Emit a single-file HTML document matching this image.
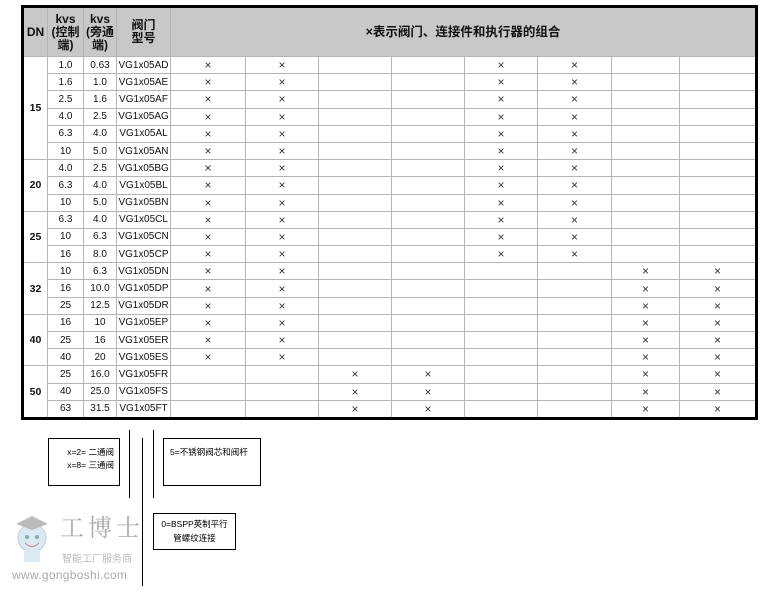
<!DOCTYPE html>
<html><head><meta charset="utf-8"><style>
body{margin:0;width:778px;height:594px;background:#fff;position:relative;overflow:hidden;font-family:"Liberation Sans","Noto Sans CJK SC",sans-serif;}
table{position:absolute;left:21px;top:5px;border-collapse:collapse;border:3px solid #000;table-layout:fixed;width:737px;}
td{border:1px solid #b4b4b4;text-align:center;font-size:10px;padding:0;height:16.2px;color:#111;}
tr.h td{background:#c8c8c8;height:48px;font-weight:bold;font-size:12px;line-height:13px;}
tr.h td.t{font-size:12.5px;}
td.dn{font-weight:bold;font-size:10.5px;}
tr.g td{border-top:1.5px solid #555;}
td.x{font-size:12px;color:#333;}
.a{position:absolute;}
.box{position:absolute;border:1px solid #000;font-size:8.5px;}
.vl{position:absolute;width:1px;background:#000;}
</style></head><body>
<table>
<colgroup><col style="width:25px"><col style="width:36px"><col style="width:33px"><col style="width:54px"><col style="width:75px"><col style="width:73px"><col style="width:73px"><col style="width:73px"><col style="width:73px"><col style="width:74px"><col style="width:68px"><col style="width:77px"></colgroup>
<tr class="h"><td>DN</td><td>kvs<br>(控制<br>端)</td><td>kvs<br>(旁通<br>端)</td><td>阀门<br>型号</td><td colspan="8" class="t">×表示阀门、连接件和执行器的组合</td></tr>
<tr><td class="dn" rowspan="6">15</td><td>1.0</td><td>0.63</td><td>VG1x05AD</td><td class="x">×</td><td class="x">×</td><td></td><td></td><td class="x">×</td><td class="x">×</td><td></td><td></td></tr>
<tr><td>1.6</td><td>1.0</td><td>VG1x05AE</td><td class="x">×</td><td class="x">×</td><td></td><td></td><td class="x">×</td><td class="x">×</td><td></td><td></td></tr>
<tr><td>2.5</td><td>1.6</td><td>VG1x05AF</td><td class="x">×</td><td class="x">×</td><td></td><td></td><td class="x">×</td><td class="x">×</td><td></td><td></td></tr>
<tr><td>4.0</td><td>2.5</td><td>VG1x05AG</td><td class="x">×</td><td class="x">×</td><td></td><td></td><td class="x">×</td><td class="x">×</td><td></td><td></td></tr>
<tr><td>6.3</td><td>4.0</td><td>VG1x05AL</td><td class="x">×</td><td class="x">×</td><td></td><td></td><td class="x">×</td><td class="x">×</td><td></td><td></td></tr>
<tr><td>10</td><td>5.0</td><td>VG1x05AN</td><td class="x">×</td><td class="x">×</td><td></td><td></td><td class="x">×</td><td class="x">×</td><td></td><td></td></tr>
<tr class="g"><td class="dn" rowspan="3">20</td><td>4.0</td><td>2.5</td><td>VG1x05BG</td><td class="x">×</td><td class="x">×</td><td></td><td></td><td class="x">×</td><td class="x">×</td><td></td><td></td></tr>
<tr><td>6.3</td><td>4.0</td><td>VG1x05BL</td><td class="x">×</td><td class="x">×</td><td></td><td></td><td class="x">×</td><td class="x">×</td><td></td><td></td></tr>
<tr><td>10</td><td>5.0</td><td>VG1x05BN</td><td class="x">×</td><td class="x">×</td><td></td><td></td><td class="x">×</td><td class="x">×</td><td></td><td></td></tr>
<tr class="g"><td class="dn" rowspan="3">25</td><td>6.3</td><td>4.0</td><td>VG1x05CL</td><td class="x">×</td><td class="x">×</td><td></td><td></td><td class="x">×</td><td class="x">×</td><td></td><td></td></tr>
<tr><td>10</td><td>6.3</td><td>VG1x05CN</td><td class="x">×</td><td class="x">×</td><td></td><td></td><td class="x">×</td><td class="x">×</td><td></td><td></td></tr>
<tr><td>16</td><td>8.0</td><td>VG1x05CP</td><td class="x">×</td><td class="x">×</td><td></td><td></td><td class="x">×</td><td class="x">×</td><td></td><td></td></tr>
<tr class="g"><td class="dn" rowspan="3">32</td><td>10</td><td>6.3</td><td>VG1x05DN</td><td class="x">×</td><td class="x">×</td><td></td><td></td><td></td><td></td><td class="x">×</td><td class="x">×</td></tr>
<tr><td>16</td><td>10.0</td><td>VG1x05DP</td><td class="x">×</td><td class="x">×</td><td></td><td></td><td></td><td></td><td class="x">×</td><td class="x">×</td></tr>
<tr><td>25</td><td>12.5</td><td>VG1x05DR</td><td class="x">×</td><td class="x">×</td><td></td><td></td><td></td><td></td><td class="x">×</td><td class="x">×</td></tr>
<tr class="g"><td class="dn" rowspan="3">40</td><td>16</td><td>10</td><td>VG1x05EP</td><td class="x">×</td><td class="x">×</td><td></td><td></td><td></td><td></td><td class="x">×</td><td class="x">×</td></tr>
<tr><td>25</td><td>16</td><td>VG1x05ER</td><td class="x">×</td><td class="x">×</td><td></td><td></td><td></td><td></td><td class="x">×</td><td class="x">×</td></tr>
<tr><td>40</td><td>20</td><td>VG1x05ES</td><td class="x">×</td><td class="x">×</td><td></td><td></td><td></td><td></td><td class="x">×</td><td class="x">×</td></tr>
<tr class="g"><td class="dn" rowspan="3">50</td><td>25</td><td>16.0</td><td>VG1x05FR</td><td></td><td></td><td class="x">×</td><td class="x">×</td><td></td><td></td><td class="x">×</td><td class="x">×</td></tr>
<tr><td>40</td><td>25.0</td><td>VG1x05FS</td><td></td><td></td><td class="x">×</td><td class="x">×</td><td></td><td></td><td class="x">×</td><td class="x">×</td></tr>
<tr><td>63</td><td>31.5</td><td>VG1x05FT</td><td></td><td></td><td class="x">×</td><td class="x">×</td><td></td><td></td><td class="x">×</td><td class="x">×</td></tr>
</table>
<div class="box" style="left:48px;top:438px;width:70px;height:46px;"><div style="position:absolute;right:5px;top:7px;line-height:13px;text-align:left">x=2= 二通阀<br>x=8= 三通阀</div></div>
<div class="vl" style="left:129px;top:430px;height:68px"></div>
<div class="vl" style="left:153px;top:430px;height:68px"></div>
<div class="vl" style="left:142px;top:438px;height:148px"></div>
<div class="box" style="left:163px;top:438px;width:96px;height:46px;"><div style="position:absolute;left:6px;top:7px">5=不锈钢阀芯和阀杆</div></div>
<div class="box" style="left:153px;top:513px;width:83px;height:37px;text-align:center;line-height:14px;padding-top:3px;box-sizing:border-box">0=BSPP英制平行<br>管螺纹连接</div>
<svg class="a" style="left:10px;top:510px" width="50" height="55"><circle cx="22" cy="28" r="14" fill="#dbe9f3" stroke="#b8cfe0"/><path d="M6 14 L22 6 L38 14 L22 20Z" fill="#bbb"/><circle cx="17" cy="27" r="2" fill="#8aa"/><circle cx="27" cy="27" r="2" fill="#8aa"/><path d="M15 33 Q22 40 29 33" stroke="#c88" fill="none"/><rect x="14" y="40" width="16" height="12" fill="#dbe9f3"/></svg>
<div class="a" style="left:60px;top:508px;font-size:24px;color:#aaa;letter-spacing:4px;font-family:'Noto Serif CJK SC',serif">工博士</div>
<div class="a" style="left:62px;top:550px;font-size:10px;color:#bbb">智能工厂服务商</div>
<div class="a" style="left:12px;top:568px;font-size:12px;color:#aaa;letter-spacing:0.3px">www.gongboshi.com</div>
</body></html>
